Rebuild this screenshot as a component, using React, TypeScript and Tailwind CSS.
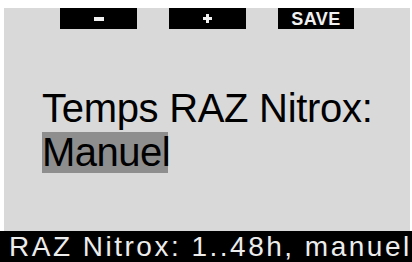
export default function App() {
  return (
    <div className="w-[412px] h-[262px] bg-white flex flex-col overflow-hidden" style={{ fontFamily: '"Liberation Sans", Arial, sans-serif' }}>
      <div className="ml-[4px] mr-[2px] mt-[8px] h-[223px] bg-[#d9d9d9] flex flex-col">
        <div className="flex gap-[32px] pl-[56px]">
          <div className="w-[77px] h-[21px] bg-black flex items-center justify-center">
            <div className="w-[10px] h-[4px] bg-[#f0f0f0]" />
          </div>
          <div className="w-[77px] h-[21px] bg-black flex items-center justify-center">
            <svg width="9" height="9" viewBox="0 0 9 9">
              <rect x="3" y="0" width="3" height="9" fill="#f0f0f0" />
              <rect x="0" y="3" width="9" height="3" fill="#f0f0f0" />
            </svg>
          </div>
          <div className="w-[76px] h-[21px] bg-black text-[#f0f0f0] flex items-center justify-center text-[18px] font-bold leading-none tracking-[0.5px]">SAVE</div>
        </div>
        <div className="mt-[59px] pl-[38px] text-black">
          <div className="text-[40px] leading-[40px] tracking-[-0.3px] whitespace-nowrap">Temps RAZ Nitrox:</div>
          <div className="mt-[4px]">
            <span className="inline-block bg-[#8e8e8e] text-[40px] leading-[41px] h-[41px] w-[126px] tracking-[-0.5px] whitespace-nowrap">Manuel</span>
          </div>
        </div>
      </div>
      <div className="h-[31px] bg-black text-[#ececec] pl-[9px] text-[28px] leading-[31px] tracking-[2.5px] whitespace-nowrap">
        RAZ Nitrox: 1..48h, manuel
      </div>
    </div>
  );
}
